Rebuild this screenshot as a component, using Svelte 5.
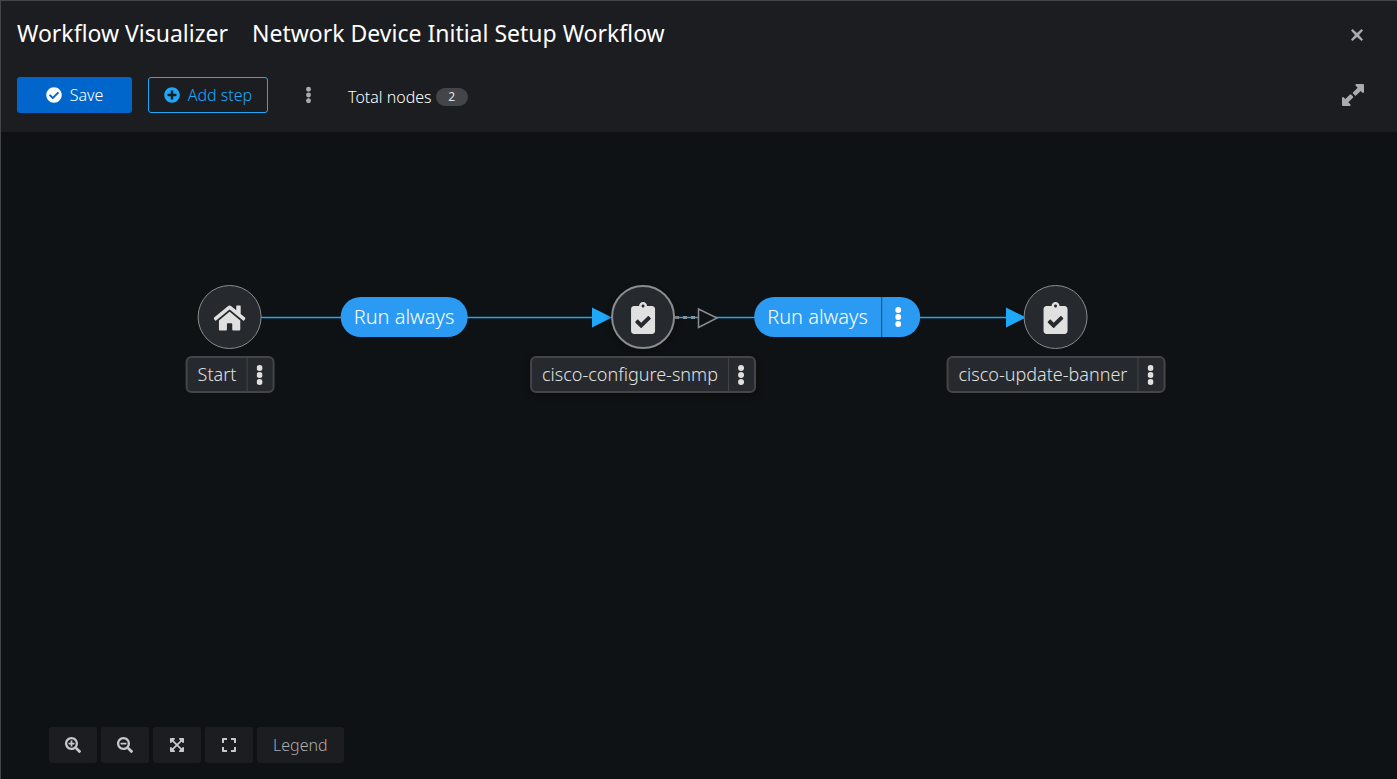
<script>
  const icons = {
    check: ['0 0 512 512', 'M504 256c0 136.967-111.033 248-248 248S8 392.967 8 256 119.033 8 256 8s248 111.033 248 248zM227.314 387.314l184-184c6.248-6.248 6.248-16.379 0-22.627l-22.627-22.627c-6.248-6.249-16.379-6.249-22.628 0L216 308.118l-70.059-70.059c-6.248-6.248-16.379-6.248-22.628 0l-22.627 22.627c-6.248 6.248-6.248 16.379 0 22.627l104 104c6.249 6.249 16.379 6.249 22.628.001z'],
    plus: ['0 0 512 512', 'M256 8C119 8 8 119 8 256s111 248 248 248 248-111 248-248S393 8 256 8zm144 276c0 6.6-5.4 12-12 12h-92v92c0 6.6-5.4 12-12 12h-56c-6.6 0-12-5.4-12-12v-92h-92c-6.6 0-12-5.4-12-12v-56c0-6.6 5.4-12 12-12h92v-92c0-6.6 5.4-12 12-12h56c6.6 0 12 5.4 12 12v92h92c6.6 0 12 5.4 12 12v56z'],
    home: ['0 0 576 512', 'M280.37 148.26L96 300.11V464a16 16 0 0 0 16 16l112.06-.29a16 16 0 0 0 15.92-16V368a16 16 0 0 1 16-16h64a16 16 0 0 1 16 16v95.64a16 16 0 0 0 16 16.05L464 480a16 16 0 0 0 16-16V300L295.67 148.26a12.19 12.19 0 0 0-15.3 0zM571.6 251.47L488 182.56V44.05a12 12 0 0 0-12-12h-56a12 12 0 0 0-12 12v72.61L318.47 43a48 48 0 0 0-61 0L4.34 251.47a12 12 0 0 0-1.6 16.9l25.5 31A12 12 0 0 0 45.15 301l235.22-193.74a12.19 12.19 0 0 1 15.3 0L530.9 301a12 12 0 0 0 16.9-1.6l25.5-31a12 12 0 0 0-1.7-16.93z'],
    clipboard: ['0 0 384 512', 'M336 64h-80c0-35.3-28.7-64-64-64s-64 28.7-64 64H48C21.5 64 0 85.5 0 112v352c0 26.5 21.5 48 48 48h288c26.5 0 48-21.5 48-48V112c0-26.5-21.5-48-48-48zM192 40c13.3 0 24 10.7 24 24s-10.7 24-24 24-24-10.7-24-24 10.7-24 24-24zm121.2 231.8l-143 141.8c-4.7 4.7-12.3 4.6-17-.1l-82.6-83.3c-4.7-4.7-4.6-12.3.1-17L99.1 285c4.7-4.7 12.3-4.6 17 .1l46 46.4 106-105.2c4.7-4.7 12.3-4.6 17 .1l28.2 28.4c4.7 4.8 4.6 12.3-.1 17z'],
    zoomIn: ['0 0 512 512', 'M304 192v32c0 6.6-5.4 12-12 12h-56v56c0 6.6-5.4 12-12 12h-32c-6.6 0-12-5.4-12-12v-56h-56c-6.6 0-12-5.4-12-12v-32c0-6.6 5.4-12 12-12h56v-56c0-6.6 5.4-12 12-12h32c6.6 0 12 5.4 12 12v56h56c6.6 0 12 5.4 12 12zm201 284.7L476.7 505c-9.4 9.4-24.6 9.4-33.9 0L343 405.3c-4.5-4.5-7-10.6-7-17V372c-35.3 27.6-79.7 44-128 44C93.1 416 0 322.9 0 208S93.1 0 208 0s208 93.1 208 208c0 48.3-16.4 92.7-44 128h16.3c6.4 0 12.5 2.5 17 7l99.7 99.7c9.3 9.4 9.3 24.6 0 34zM344 208c0-75.2-60.8-136-136-136S72 132.8 72 208s60.8 136 136 136 136-60.8 136-136z'],
    zoomOut: ['0 0 512 512', 'M304 192v32c0 6.6-5.4 12-12 12H124c-6.6 0-12-5.4-12-12v-32c0-6.6 5.4-12 12-12h168c6.6 0 12 5.4 12 12zm201 284.7L476.7 505c-9.4 9.4-24.6 9.4-33.9 0L343 405.3c-4.5-4.5-7-10.6-7-17V372c-35.3 27.6-79.7 44-128 44C93.1 416 0 322.9 0 208S93.1 0 208 0s208 93.1 208 208c0 48.3-16.4 92.7-44 128h16.3c6.4 0 12.5 2.5 17 7l99.7 99.7c9.3 9.4 9.3 24.6 0 34zM344 208c0-75.2-60.8-136-136-136S72 132.8 72 208s60.8 136 136 136 136-60.8 136-136z'],
    fit: ['0 0 448 512', 'M448 344v112a23.94 23.94 0 0 1-24 24H312c-21.39 0-32.09-25.9-17-41l36.2-36.2L224 295.6 116.77 402.9 153 439c15.09 15.1 4.39 41-17 41H24a23.94 23.94 0 0 1-24-24V344c0-21.4 25.89-32.1 41-17l36.19 36.2L184.46 256 77.18 148.7 41 185c-15.1 15.1-41 4.4-41-17V56a23.94 23.94 0 0 1 24-24h112c21.39 0 32.09 25.9 17 41l-36.2 36.2L224 216.4l107.23-107.3L295 73c-15.09-15.1-4.39-41 17-41h112a23.94 23.94 0 0 1 24 24v112c0 21.4-25.89 32.1-41 17l-36.19-36.2L263.54 256l107.28 107.3L407 327.1c15.1-15.2 41-4.5 41 16.9z'],
    reset: ['0 0 448 512', 'M0 180V56c0-13.3 10.7-24 24-24h124c6.6 0 12 5.4 12 12v40c0 6.6-5.4 12-12 12H64v84c0 6.6-5.4 12-12 12H12c-6.6 0-12-5.4-12-12zM288 44v40c0 6.6 5.4 12 12 12h84v84c0 6.6 5.4 12 12 12h40c6.6 0 12-5.4 12-12V56c0-13.3-10.7-24-24-24H300c-6.6 0-12 5.4-12 12zm148 276h-40c-6.6 0-12 5.4-12 12v84h-84c-6.6 0-12 5.4-12 12v40c0 6.6 5.4 12 12 12h124c13.3 0 24-10.7 24-24V332c0-6.6-5.4-12-12-12zM160 468v-40c0-6.6-5.4-12-12-12H64v-84c0-6.6-5.4-12-12-12H12c-6.6 0-12 5.4-12 12v124c0 13.3 10.7 24 24 24h124c6.6 0 12-5.4 12-12z'],
    expand: ['0 0 22 22', 'M14 0h7a1 1 0 0 1 1 1v7q-.3 1.400-1.500.7l-1.800-1.800-4.700 4.500q-.7.500-1.300-.1l-1.700-1.700q-.5-.7.1-1.300l4.600-4.600-2-2q-.8-1.200.3-1.700zM8 22H1a1 1 0 0 1-1-1v-7q.3-1.400 1.500-.7l1.800 1.800 4.700-4.500q.7-.5 1.300.1l1.700 1.700q.5.7-.1 1.300l-4.600 4.600 2 2q.8 1.200-.3 1.700z'],
    close: ['0 0 12 12', 'M1.500 0 6 4 10.500 0 12 1.500 8 6 12 10.500 10.500 12 6 8 1.500 12 0 10.500 4 6 0 1.500z']
  };

  const nodes = [
    { name: 'Start', icon: 'home', x: 229 },
    { name: 'cisco-configure-snmp', icon: 'clipboard', x: 642, hovered: true },
    { name: 'cisco-update-banner', icon: 'clipboard', x: 1055 }
  ];
  const edges = [
    { label: 'Run always', x: 403, menu: false },
    { label: 'Run always', x: 836, menu: true }
  ];
  const controls = [
    ['Zoom in', 'zoomIn'],
    ['Zoom out', 'zoomOut'],
    ['Fit to screen', 'fit'],
    ['Reset view', 'reset']
  ];
</script>

{#snippet icon(name, size)}
  <svg class="icon {size}" viewBox={icons[name][0]} aria-hidden="true"><path d={icons[name][1]} /></svg>
{/snippet}

{#snippet dots(size)}
  <svg class="dots {size}" viewBox="0 0 6 22" aria-hidden="true">
    <circle cx="3" cy="4" r="3" /><circle cx="3" cy="11" r="3" /><circle cx="3" cy="18" r="3" />
  </svg>
{/snippet}

<div class="visualizer">
  <header>
    <div class="titles">
      <h1>Workflow Visualizer</h1>
      <h2>Network Device Initial Setup Workflow</h2>
      <button class="plain close" aria-label="Close">{@render icon('close', 'tiny')}</button>
    </div>
    <div class="toolbar">
      <button class="action primary">{@render icon('check', 'small')}Save</button>
      <button class="action secondary">{@render icon('plus', 'small')}Add step</button>
      <button class="plain kebab" aria-label="More actions">{@render dots('small')}</button>
      <p>Total nodes <span class="badge">2</span></p>
      <button class="plain expand" aria-label="Expand">{@render icon('expand', 'medium')}</button>
    </div>
  </header>

  <main>
    <svg class="links" aria-hidden="true">
      <path class="link" d="M197 185.500H592M674 185.500H1006" />
      <path class="arrow" d="M591 175.500v20l20-10zM1005 175.500v20l20-10z" />
      <path class="pending" d="M674 185.500H697" />
      <path class="pending-arrow" d="M697.500 177v18.500l18.500-9.500z" />
    </svg>

    {#each edges as edge}
      <div class="edge" style:left="{edge.x}px">
        <span>{edge.label}</span>
        {#if edge.menu}
          <button aria-label="Link actions">{@render dots('large')}</button>
        {/if}
      </div>
    {/each}

    {#each nodes as node}
      <div class="node" class:hovered={node.hovered} style:left="{node.x}px">
        <div class="disc">{@render icon(node.icon, 'big')}</div>
        <div class="label">
          <span>{node.name}</span>
          <button aria-label="{node.name} actions">{@render dots('large')}</button>
        </div>
      </div>
    {/each}

    <nav aria-label="View controls">
      {#each controls as [title, name]}
        <button aria-label={title}>{@render icon(name, 'small')}</button>
      {/each}
      <button>Legend</button>
    </nav>
  </main>
</div>

<style>
  :global(body) {
    margin: 0;
    background: #0f1214;
  }
  .visualizer {
    box-sizing: border-box;
    min-height: 100vh;
    display: flex;
    flex-direction: column;
    border-top: 1px solid #444548;
    border-left: 1px solid #444548;
    color: #fff;
    font: 300 16px/24px "Noto Sans", "Open Sans", sans-serif;
  }
  button {
    margin: 0;
    padding: 0;
    border: 0;
    background: none;
    color: inherit;
    font: inherit;
    display: flex;
    align-items: center;
    justify-content: center;
    cursor: pointer;
  }
  svg {
    display: block;
    fill: currentColor;
  }
  header {
    background: #1b1d21;
    padding: 16px 16px 19px;
    display: flex;
    flex-direction: column;
    gap: 28px;
  }
  .titles,
  .toolbar {
    display: flex;
    align-items: center;
  }
  .titles {
    gap: 24px;
    height: 32px;
  }
  h1,
  h2 {
    margin: 0;
    font-size: 23px;
    line-height: 32px;
    font-weight: 400;
  }
  .plain {
    color: #aaabac;
    width: 48px;
    height: 36px;
  }
  .close {
    margin-left: auto;
    padding-top: 3px;
  }
  .action {
    height: 36px;
    gap: 8px;
    border-radius: 3px;
  }
  .primary {
    width: 115px;
    background: #06c;
    margin-right: 16px;
  }
  .secondary {
    width: 120px;
    border: 1px solid #1fa7f8;
    color: #1fa7f8;
    margin-right: 16px;
  }
  .toolbar p {
    margin: 0 0 0 16px;
    padding-top: 4px;
    display: flex;
    align-items: center;
    gap: 4px;
  }
  .badge {
    min-width: 32px;
    text-align: center;
    border-radius: 10px;
    background: #444548;
    font-size: 12px;
    line-height: 18px;
    font-weight: 400;
    color: #e0e0e0;
  }
  .expand {
    margin-left: auto;
    padding-right: 8px;
  }
  .icon.tiny { width: 12px; height: 12px; }
  .icon.small { width: 16px; height: 16px; }
  .icon.medium { width: 22px; height: 22px; }
  .icon.big { width: 32px; height: 32px; }
  .dots.small { width: 5px; height: 18px; }
  .dots.large { width: 6px; height: 22px; }

  main {
    flex: 1;
    position: relative;
    display: flex;
    align-items: flex-end;
    background: #0f1214;
    overflow: hidden;
  }
  .links {
    position: absolute;
    inset: 0;
    width: 100%;
    height: 100%;
  }
  .link {
    stroke: #1fa7f8;
    stroke-width: 1.500;
  }
  .arrow {
    fill: #1fa7f8;
  }
  .pending {
    stroke: #8a8d90;
    stroke-width: 3;
    stroke-dasharray: 4;
  }
  .pending-arrow {
    fill: #0f1214;
    stroke: #8a8d90;
    stroke-width: 1.500;
  }
  .edge {
    position: absolute;
    top: 165px;
    height: 40px;
    display: flex;
    align-items: center;
    transform: translateX(-50%);
    border-radius: 20px;
    background: #2b9af3;
    font-size: 20px;
    white-space: nowrap;
  }
  .edge span {
    padding: 0 13px;
  }
  .edge button {
    width: 39px;
    height: 40px;
    padding-right: 6px;
    border-left: 1px solid #444548;
  }
  .node {
    position: absolute;
    top: 153px;
    display: flex;
    flex-direction: column;
    align-items: center;
    gap: 7px;
    transform: translateX(-50%);
    color: #e0e0e0;
    font-size: 18px;
  }
  .disc {
    box-sizing: border-box;
    width: 64px;
    height: 64px;
    padding-top: 1px;
    display: flex;
    align-items: center;
    justify-content: center;
    border: 1px solid #8a8d90;
    border-radius: 50%;
    background: #26292d;
  }
  .hovered .disc {
    border-width: 2px;
    box-shadow: 0 2px 6px #0006;
  }
  .label {
    display: flex;
    box-sizing: border-box;
    height: 37px;
    border: 2px solid #444548;
    border-radius: 6px;
    background: #26292d;
    white-space: nowrap;
  }
  .hovered .label {
    box-shadow: 0 2px 6px #0006;
  }
  .label span {
    padding: 0 10px;
    line-height: 33px;
  }
  .label button {
    width: 26px;
    border-left: 1px solid #444548;
  }
  nav {
    position: relative;
    display: flex;
    flex-wrap: wrap;
    gap: 4px;
    padding: 0 48px 16px;
  }
  nav button {
    min-width: 48px;
    height: 36px;
    border-radius: 3px;
    background: #1b1d21;
    color: #c8c9ca;
  }
  nav button:last-child {
    padding: 0 16px;
    color: #aaabac;
  }
</style>
